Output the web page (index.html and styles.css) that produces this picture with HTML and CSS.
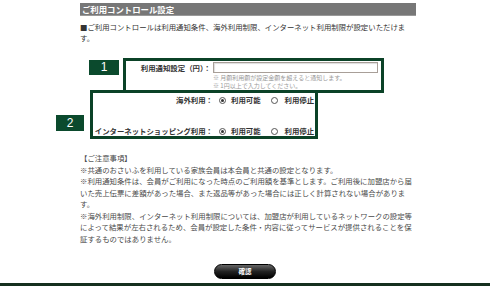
FILE: index.html
```html
<!DOCTYPE html>
<html lang="ja">
<head>
    <meta charset="UTF-8">
    <meta name="viewport" content="width=device-width, initial-scale=1.0">
    <title>ご利用コントロール設定</title>
    <link rel="stylesheet" href="styles.css">
</head>
<body>
    <div class="col">
        <h2 class="title">ご利用コントロール設定</h2>
        <p class="lead">■ご利用コントロールは利用通知条件、海外利用制限、インターネット利用制限が設定いただけま</p>
        <p class="lead-end">す。</p>
    </div>

    <div class="step step-1">
        <span class="badge">1</span>
        <div class="box box-notice">
            <label class="field-label" for="amount">利用通知設定（円）：</label>
            <div class="field">
                <input type="text" id="amount" class="amount">
                <p class="hint">※ 月額利用額が設定金額を超えると通知します。<br>※ 1円以上で入力してください。</p>
            </div>
        </div>
    </div>

    <div class="step step-2">
        <span class="badge">2</span>
        <div class="box box-limits">
            <div class="limit-row">
                <span class="field-label wide">海外利用：</span>
                <span class="radio on"></span><span class="opt">利用可能</span>
                <span class="radio off"></span><span class="opt">利用停止</span>
            </div>
            <div class="limit-row">
                <span class="field-label wide">インターネットショッピング利用：</span>
                <span class="radio on"></span><span class="opt">利用可能</span>
                <span class="radio off"></span><span class="opt">利用停止</span>
            </div>
        </div>
    </div>

    <div class="col notes">
        <p>【ご注意事項】<br>
        ※共通のおさいふを利用している家族会員は本会員と共通の設定となります。<br>
        ※利用通知条件は、会員がご利用になった時点のご利用額を基準とします。ご利用後に加盟店から届<br>
        いた売上伝票に差額があった場合、また返品等があった場合には正しく計算されない場合がありま<br>
        す。<br>
        ※海外利用制限、インターネット利用制限については、加盟店が利用しているネットワークの設定等<br>
        によって結果が左右されるため、会員が設定した条件・内容に従ってサービスが提供されることを保<br>
        証するものではありません。</p>
    </div>

    <div class="actions">
        <button class="confirm">確認</button>
    </div>
    <div class="footer-band"></div>
</body>
</html>
```

FILE: styles.css
```css
body { margin: 0; padding-top: 3px; width: 490px; background: #fff; font-family: "Noto Sans CJK JP", "Noto Sans", sans-serif; font-size: 7.4px; color: #333; }
p { margin: 0; }
.col { margin-left: 80px; width: 336px; }
.title { margin: 0; height: 13px; line-height: 13px; padding-left: 2px; background: #777; border-bottom: 1px solid #999; box-sizing: border-box; color: #fff; font-size: 8.4px; font-weight: bold; }
.lead { margin-top: 5px; line-height: 11px; white-space: nowrap; color: #333; }
.lead-end { line-height: 11px; color: #333; }

.step { display: flex; }
.step-1 { margin-top: 15px; padding-left: 89px; gap: 4px; align-items: flex-start; }
.step-2 { margin-top: -3px; padding-left: 56px; gap: 6px; align-items: flex-end; }
.badge { display: block; width: 30px; height: 15px; line-height: 15px; background: #0b4a2d; color: #fff; text-align: center; font-family: "Liberation Sans", sans-serif; font-size: 12px; }
.step-1 .badge { margin-top: 2px; }
.step-2 .badge { width: 28px; height: 16px; line-height: 16px; margin-bottom: 8px; }

.box { box-sizing: border-box; border: 3px solid #0b4227; background: #fff; }
.box-notice { display: flex; width: 261px; height: 35px; }
.box-limits { display: flex; flex-direction: column; justify-content: space-between; width: 228px; height: 49px; padding-top: 2px; }

.field-label { width: 85px; flex: none; text-align: right; font-weight: bold; color: #333; line-height: 11px; margin-top: 1px; }
.field-label.wide { width: 120px; margin-top: 0; line-height: 10px; }
.field { margin-left: 2px; }
.amount { display: block; box-sizing: border-box; width: 165px; height: 11px; margin: 1px 0 0; padding: 0; border: 1px solid #a89f98; box-shadow: inset 1px 1px 1px #ddd; }
.hint { margin-top: 1px; font-size: 6px; line-height: 8px; color: #9a9a9a; white-space: nowrap; }

.limit-row { display: flex; align-items: center; height: 10px; }
.radio { box-sizing: border-box; width: 7px; height: 7px; border: 1px solid #555; border-radius: 50%; background: #fff; display: flex; align-items: center; justify-content: center; }
.radio.on { margin-left: 6px; }
.radio.on::after { content: ""; width: 3px; height: 3px; border-radius: 50%; background: #333; }
.radio.off { margin-left: 10px; }
.opt { margin-left: 5px; font-weight: bold; line-height: 10px; color: #333; }
.radio.off + .opt { margin-left: 7px; }

.notes { margin-top: 13px; line-height: 11.5px; white-space: nowrap; color: #4a4a4a; }

.actions { display: flex; justify-content: center; margin-top: 20px; }
.confirm { width: 62px; height: 15px; padding: 0; border: 1px solid #000; border-radius: 8px; background: linear-gradient(#666, #222 50%, #000); color: #fff; font-family: "Noto Sans CJK JP", sans-serif; font-size: 6.5px; font-weight: bold; line-height: 13px; }
.footer-band { margin-top: 4px; height: 3px; background: #15301f; }
```
